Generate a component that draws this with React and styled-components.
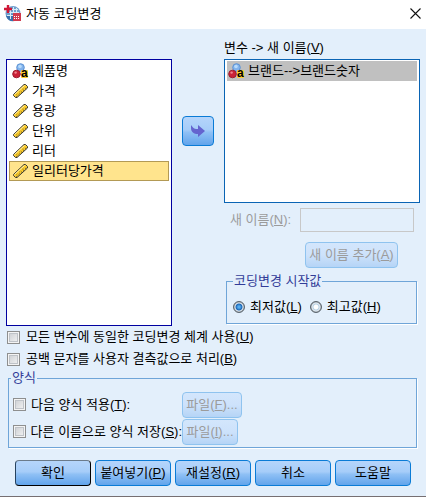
import React, { useState } from 'react';
import styled, { createGlobalStyle, css } from 'styled-components';

const GlobalStyle = createGlobalStyle`
  * {
    box-sizing: border-box;
  }
  body {
    margin: 0;
    background: #e3effb;
  }
  body, button, input {
    font-family: 'Liberation Sans', 'Noto Sans CJK KR', sans-serif;
    font-size: 13px;
    font-weight: 400;
    line-height: 20px;
    color: #000;
  }
`;

const Window = styled.div`
  background: #e3effb;
  border-bottom: 1px solid #766f72;
`;

const TitleBar = styled.header`
  display: flex;
  align-items: center;
  height: 29px;
  padding: 0 5px 2px 4px;
  gap: 5px;
  background: #fff;
`;

const Title = styled.h1`
  flex: 1;
  margin: 0;
  font-size: 13px;
  font-weight: 400;
  line-height: 20px;
`;

const CloseButton = styled.button`
  display: flex;
  padding: 0;
  border: 0;
  background: none;
`;

const Body = styled.main`
  padding: 9px 6px 10px;
`;

const Columns = styled.div`
  display: grid;
  grid-template-columns: 166px 32px minmax(0, 1fr);
  column-gap: 10px;
`;

const List = styled.ul`
  margin: 0;
  padding: 1px 2px;
  list-style: none;
  background: #fff;
  border: 1px solid ${(p) => p.$color};
  height: ${(p) => p.$height}px;
`;

const SourceList = styled(List)`
  margin-top: 21px;
`;

const Item = styled.li`
  display: flex;
  align-items: center;
  gap: 3px;
  height: 20px;
  padding: 0 2px;
  border: 1px solid transparent;
  white-space: pre;
  ${(p) =>
    p.$state === 'focused' &&
    css`
      background: #ffe48d;
      border-color: #b39a55;
    `}
  ${(p) =>
    p.$state === 'selected' &&
    css`
      padding: 0;
      background: #c0c0c0;
    `}
`;

const Button = styled.button`
  height: 26px;
  padding: 0;
  width: ${(p) => p.$width}px;
  border: 1px solid ${(p) => (p.$primary ? '#26425f' : '#0a7bd6')};
  border-radius: 4px;
  background: linear-gradient(#b5d5fb 0%, #a6cdf9 45%, #8fc0f5 55%, #62a4eb 100%);
  white-space: nowrap;
  ${(p) =>
    p.$primary &&
    css`
      border-color: #6b7b8b #000 #000 #26425f;
    `}
  &:disabled {
    color: #9b9b9b;
    border-color: #8fc3ef;
    background: linear-gradient(#d3e6fc 0%, #cde2fb 50%, #b5d4f6 100%);
  }
`;

const MoveButton = styled(Button)`
  display: flex;
  align-items: center;
  justify-content: center;
  height: 30px;
  margin-top: 78px;
`;

const Target = styled.section`
  display: flex;
  flex-direction: column;
`;

const ListTitle = styled.div`
  height: 21px;
`;

const NameRow = styled.div`
  display: flex;
  align-items: center;
  justify-content: space-between;
  margin: 5px 6px 0;
  color: #9b9b9b;
`;

const NameInput = styled.input`
  width: 114px;
  height: 24px;
  border: 1px solid #c8c8c8;
  background: transparent;
`;

const AddButton = styled(Button)`
  align-self: flex-end;
  margin: 10px 22px 0 0;
`;

const Group = styled.fieldset`
  min-width: 0;
  margin: 0;
  padding: 0 8px;
  border: 1px solid #6fa5d8;
  box-shadow: 1px 1px 0 #fff;
`;

const Legend = styled.legend`
  margin-left: -2px;
  padding: 0 1px;
  line-height: 16px;
  color: #323c98;
`;

const StartGroup = styled(Group)`
  margin: 5px 3px 0 2px;
`;

const RadioRow = styled.div`
  display: flex;
  gap: 8px;
  padding: 8px 0 6px;
  margin-left: -2px;
`;

const Choice = styled.label`
  display: flex;
  align-items: center;
  gap: ${(p) => p.$gap || 6}px;
  height: ${(p) => p.$height || 20}px;
  white-space: nowrap;
`;

const Radio = styled.input.attrs({ type: 'radio' })`
  appearance: none;
  width: 12px;
  height: 12px;
  margin: 0;
  border: 1px solid #59636c;
  border-radius: 50%;
  background: radial-gradient(circle, #fff 0 2px, #b4cfe4 3px, #e8eef3 4px, #9aa2aa 5px);
  &:checked {
    background: radial-gradient(circle, #55aef0 0 1px, #1c66b6 3px, #e8eef3 4px, #9aa2aa 5px);
  }
`;

const Checkbox = styled.input.attrs({ type: 'checkbox' })`
  appearance: none;
  width: 13px;
  height: 13px;
  margin: 0;
  border: 1px solid #8e8f8f;
  background: linear-gradient(135deg, #c9ccd0, #f6f6f6);
  box-shadow: inset 0 0 0 1px #f4f4f4, inset 0 0 0 2px #bfc3c8;
  &:checked {
    background: #1558a6;
  }
`;

const Options = styled.div`
  padding: 0 1px;
  display: flex;
  flex-direction: column;
  align-items: flex-start;
`;

const TemplateGroup = styled(Group)`
  margin: 0 3px 0 2px;
  padding: 0 4px 2px;
`;

const TemplateRow = styled.div`
  display: grid;
  grid-template-columns: 169px auto;
  justify-content: start;
  align-items: center;
  height: 27px;
`;

const TemplateRows = styled.div`
  padding-top: 5px;
`;

const Footer = styled.footer`
  display: grid;
  grid-template-columns: repeat(5, minmax(0, 1fr));
  gap: 4px;
  margin: 12px 9px 0;
`;

const FooterButton = styled(Button)`
  width: 100%;
`;

const AppIcon = () => (
  <svg width="17" height="17" viewBox="0 0 17 17">
    <circle cx="9" cy="8.5" r="7.5" fill="#6f9fce" />
    <path d="M2 11c2 7 11 7 14 0l-4-2-7 1z" fill="#3971ad" />
    <path d="M5 4.5h9M3 7.5h12M3 10.5h8M6.5 3v11M9.5 2v12M12.5 3v8" stroke="#d8eaf6" />
    <path d="M0 4h8M4 0v8" stroke="#d01736" strokeWidth="2.4" />
    <rect x="9" y="8" width="8" height="8" fill="#d03a4e" />
    <path d="M10 11.5h6M10 13.5h6" stroke="#fff" strokeDasharray="1 1" />
  </svg>
);

const NominalIcon = () => (
  <svg width="17" height="18" viewBox="0 0 17 18">
    <circle cx="8.5" cy="5.5" r="3.8" fill="#83b3ec" stroke="#5b92d4" />
    <circle cx="8" cy="4.5" r="1.8" fill="#b7dbfb" />
    <circle cx="4.5" cy="12" r="3.8" fill="#cb2138" stroke="#9c1d30" />
    <circle cx="3.6" cy="10.6" r="1.2" fill="#ee8590" />
    <rect x="9" y="8" width="7" height="8" rx="1" fill="#ffce2e" />
    <text x="9" y="15" fontSize="12" fontWeight="700" fontFamily="Liberation Sans, sans-serif">a</text>
  </svg>
);

const ScaleIcon = () => (
  <svg width="17" height="16" viewBox="0 0 17 16">
    <path d="M1.5 11.5L12 1.5h1.5L15.5 3.5V5L5 14.5H3.5L1.5 12.5z" fill="#fbcb2c" stroke="#3a3a34" />
    <path d="M2.5 11.5L12.5 2.5" stroke="#fff3b0" />
    <path d="M4.5 13.5L14.5 4.5" stroke="#303030" strokeDasharray="1 2" />
    <path d="M4.5 11.5L13 4" stroke="#8a7315" strokeDasharray="1 3" />
  </svg>
);

const ArrowIcon = () => (
  <svg width="14" height="14" viewBox="0 0 14 14">
    <path d="M0 1l2 2.5c1 1 2.5 1.5 5 1.5V1l7 6-7 6V10C3 10 0 8 0 4z" fill="#6464cf" />
  </svg>
);

const CloseIcon = () => (
  <svg width="11" height="11" viewBox="0 0 11 11">
    <path d="M.5 .5l10 10M10.5 .5l-10 10" stroke="#111" strokeWidth="1.1" />
  </svg>
);

const variables = [
  { name: '제품명', icon: NominalIcon },
  { name: '가격', icon: ScaleIcon },
  { name: '용량', icon: ScaleIcon },
  { name: '단위', icon: ScaleIcon },
  { name: '리터', icon: ScaleIcon },
  { name: '일리터당가격', icon: ScaleIcon, state: 'focused' },
];

const App = () => {
  const [start, setStart] = useState('low');

  return (
    <>
      <GlobalStyle />
      <Window>
        <TitleBar>
          <AppIcon />
          <Title>자동 코딩변경</Title>
          <CloseButton aria-label="닫기">
            <CloseIcon />
          </CloseButton>
        </TitleBar>
        <Body>
          <Columns>
            <SourceList $color="#0000a0" $height={267}>
              {variables.map(({ name, icon: Icon, state }) => (
                <Item key={name} $state={state}>
                  <Icon />
                  {name}
                </Item>
              ))}
            </SourceList>
            <MoveButton $width={32} aria-label="이동">
              <ArrowIcon />
            </MoveButton>
            <Target>
              <ListTitle>
                변수 -&gt; 새 이름(<u>V</u>)
              </ListTitle>
              <List $color="#0a64b4" $height={144}>
                <Item $state="selected">
                  <NominalIcon />
                  브랜드--&gt;브랜드숫자
                </Item>
              </List>
              <NameRow>
                <label htmlFor="new-name">
                  새 이름(<u>N</u>):
                </label>
                <NameInput id="new-name" disabled />
              </NameRow>
              <AddButton $width={93} disabled>
                새 이름 추가(<u>A</u>)
              </AddButton>
              <StartGroup>
                <Legend>코딩변경 시작값</Legend>
                <RadioRow>
                  <Choice $gap={5}>
                    <Radio name="start" checked={start === 'low'} onChange={() => setStart('low')} />
                    <span>
                      최저값(<u>L</u>)
                    </span>
                  </Choice>
                  <Choice $gap={5}>
                    <Radio name="start" checked={start === 'high'} onChange={() => setStart('high')} />
                    <span>
                      최고값(<u>H</u>)
                    </span>
                  </Choice>
                </RadioRow>
              </StartGroup>
            </Target>
          </Columns>
          <Options>
            <Choice $height={22}>
              <Checkbox />
              <span>
                모든 변수에 동일한 코딩변경 체계 사용(<u>U</u>)
              </span>
            </Choice>
            <Choice $height={22}>
              <Checkbox />
              <span>
                공백 문자를 사용자 결측값으로 처리(<u>B</u>)
              </span>
            </Choice>
          </Options>
          <TemplateGroup>
            <Legend>양식</Legend>
            <TemplateRows>
              <TemplateRow>
                <Choice $gap={5}>
                  <Checkbox />
                  <span>
                    다음 양식 적용(<u>T</u>):
                  </span>
                </Choice>
                <Button $width={60} disabled>
                  파일(<u>F</u>)...
                </Button>
              </TemplateRow>
              <TemplateRow>
                <Choice $gap={5}>
                  <Checkbox />
                  <span>
                    다른 이름으로 양식 저장(<u>S</u>):
                  </span>
                </Choice>
                <Button $width={56} disabled>
                  파일(<u>I</u>)...
                </Button>
              </TemplateRow>
            </TemplateRows>
          </TemplateGroup>
          <Footer>
            <FooterButton $primary>확인</FooterButton>
            <FooterButton>
              붙여넣기(<u>P</u>)
            </FooterButton>
            <FooterButton>
              재설정(<u>R</u>)
            </FooterButton>
            <FooterButton>취소</FooterButton>
            <FooterButton>도움말</FooterButton>
          </Footer>
        </Body>
      </Window>
    </>
  );
};

export default App;
